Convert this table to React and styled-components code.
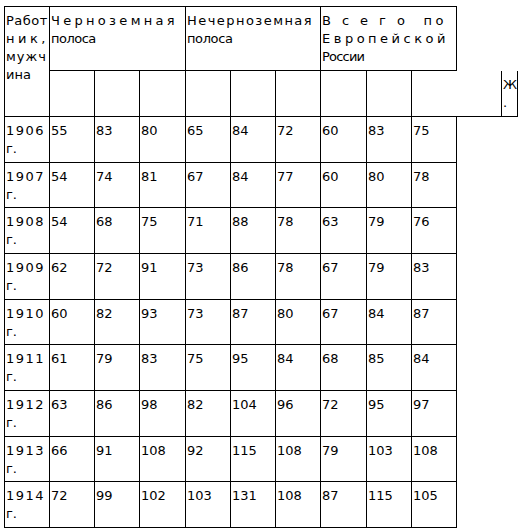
import React from "react";
import styled, { createGlobalStyle } from "styled-components";

const Global = createGlobalStyle`
  html, body { margin: 0; padding: 0; background: #fff; }
  body { font-family: "DejaVu Sans", Verdana, sans-serif; color: #000; }
`;

const Page = styled.div`
  padding: 6px 0 0 4px;
`;

const Table = styled.table`
  border-collapse: collapse;
  table-layout: fixed;
  width: 514px;
  font-family: "DejaVu Sans", Verdana, sans-serif;
  font-size: 13px;
  line-height: 18px;
  color: #000;
`;

const Col = styled.col`
  width: ${(p) => p.$w}px;
`;

const Row = styled.tr`
  height: ${(p) => p.$h}px;
`;

const line = "1px solid #000";

const Cell = styled.td`
  border-top: ${(p) => (p.$edges.includes("t") ? line : "none")};
  border-right: ${(p) => (p.$edges.includes("r") ? line : "none")};
  border-bottom: ${(p) => (p.$edges.includes("b") ? line : "none")};
  border-left: ${(p) => (p.$edges.includes("l") ? line : "none")};
  padding: 5px 0 0 1px;
  vertical-align: top;
  text-align: left;
  white-space: nowrap;
  overflow: visible;
`;

const Line = styled.span`
  display: block;
  white-space: pre;
  letter-spacing: ${(p) => p.$ls || 0}px;
`;

const Part = styled.span`
  letter-spacing: ${(p) => p.$ls || 0}px;
`;

const widths = [45, 45, 45, 46, 45, 45, 45, 46, 45, 45, 45, 16];

const rows = [
  ["1906", [55, 83, 80, 65, 84, 72, 60, 83, 75]],
  ["1907", [54, 74, 81, 67, 84, 77, 60, 80, 78]],
  ["1908", [54, 68, 75, 71, 88, 78, 63, 79, 76]],
  ["1909", [62, 72, 91, 73, 86, 78, 67, 79, 83]],
  ["1910", [60, 82, 93, 73, 87, 80, 67, 84, 87]],
  ["1911", [61, 79, 83, 75, 95, 84, 68, 85, 84]],
  ["1912", [63, 86, 98, 82, 104, 96, 72, 95, 97]],
  ["1913", [66, 91, 108, 92, 115, 108, 79, 103, 108]],
  ["1914", [72, 99, 102, 103, 131, 108, 87, 115, 105]],
];

export default function App() {
  return (
    <Page>
      <Global />
      <Table>
        <colgroup>
          {widths.map((w, i) => (
            <Col key={i} $w={w} />
          ))}
        </colgroup>
        <tbody>
          <Row $h={64}>
            <Cell rowSpan={2} $edges="trbl">
              <Line $ls={0.5}>Работ</Line>
              <Line $ls={3.5}>ник,</Line>
              <Line $ls={1}>мужч</Line>
              <Line>ина</Line>
            </Cell>
            <Cell colSpan={3} $edges="trbl">
              <Line $ls={3.3}>Черноземная</Line>
              <Line $ls={-0.5}>полоса</Line>
            </Cell>
            <Cell colSpan={3} $edges="trbl">
              <Line $ls={1.45}>Нечерноземная</Line>
              <Line $ls={-0.4}>полоса</Line>
            </Cell>
            <Cell colSpan={3} $edges="trbl">
              <Line>
                <Part $ls={11}>Всего</Part>
                <Part $ls={3.5}> по</Part>
              </Line>
              <Line $ls={3.5}>Европейской</Line>
              <Line $ls={-0.8}>России</Line>
            </Cell>
          </Row>
          <Row $h={46}>
            {Array.from({ length: 9 }, (_, i) => (
              <Cell key={i} $edges={i === 8 ? "tbl" : "trbl"} />
            ))}
            <Cell $edges="b" />
            <Cell $edges="rbl">
              <Line>Ж</Line>
              <Line>.</Line>
            </Cell>
          </Row>
          {rows.map(([year, vals]) => (
            <Row key={year} $h={45.67}>
              <Cell $edges="trbl">
                <Line $ls={1.5}>{year}</Line>
                <Line>г.</Line>
              </Cell>
              {vals.map((v, i) => (
                <Cell key={i} $edges="trbl">
                  {v}
                </Cell>
              ))}
            </Row>
          ))}
        </tbody>
      </Table>
    </Page>
  );
}
